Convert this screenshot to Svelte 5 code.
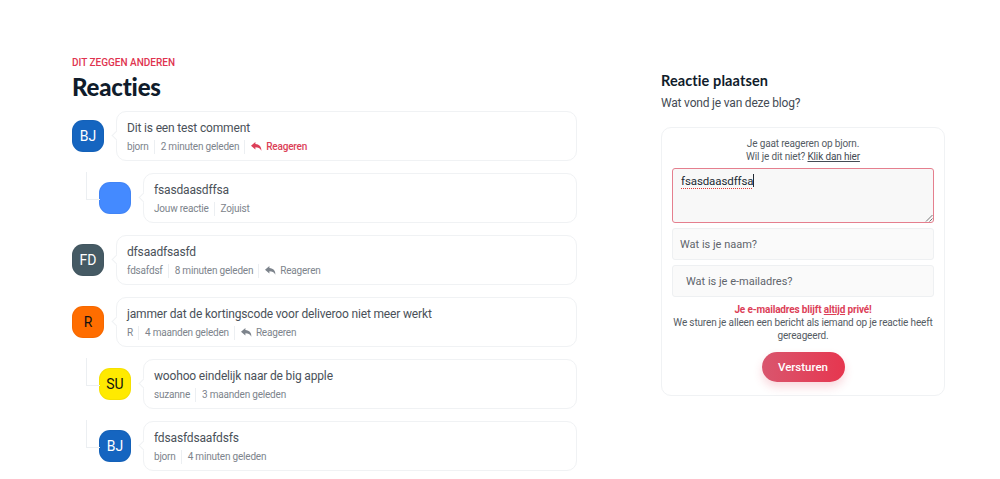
<script>
  const comments = [
    { text: 'Dit is een test comment', name: 'bjorn', time: '2 minuten geleden', initials: 'BJ', color: '#1565c0', ink: '#fff', reply: 'active' },
    { text: 'fsasdaasdffsa', name: 'Jouw reactie', time: 'Zojuist', initials: '', color: '#448aff', nested: true },
    { text: 'dfsaadfsasfd', name: 'fdsafdsf', time: '8 minuten geleden', initials: 'FD', color: '#455a64', ink: '#fff', reply: 'plain' },
    { text: 'jammer dat de kortingscode voor deliveroo niet meer werkt', name: 'R', time: '4 maanden geleden', initials: 'R', color: '#ff6d00', ink: '#111', reply: 'plain' },
    { text: 'woohoo eindelijk naar de big apple', name: 'suzanne', time: '3 maanden geleden', initials: 'SU', color: '#ffea00', ink: '#111', nested: true },
    { text: 'fdsasfdsaafdsfs', name: 'bjorn', time: '4 minuten geleden', initials: 'BJ', color: '#1565c0', ink: '#fff', nested: true }
  ];
</script>

<div class="page">
  <section class="left">
    <div class="eyebrow">DIT ZEGGEN ANDEREN</div>
    <h1>Reacties</h1>
    <ul class="list">
      {#each comments as c}
        <li class="row" class:nested={c.nested}>
          <div class="avatar" style="background: {c.color}; color: {c.ink}">{c.initials}</div>
          <div class="card">
            <div class="text">{c.text}</div>
            <div class="meta">
              <span>{c.name}</span>
              <span class="sep">{c.time}</span>
              {#if c.reply}
                <span class="sep reply" class:active={c.reply === 'active'}>
                  <svg width="11" height="10" viewBox="0 0 11 10"><path d="M4.400 0 0 3.800l4.400 3.800V5.300c2.700 0 4.700.8 5.900 3.500.3-3.800-1.800-6.300-5.900-6.700z" fill="currentColor"/></svg>
                  Reageren
                </span>
              {/if}
            </div>
          </div>
        </li>
      {/each}
    </ul>
  </section>

  <aside class="right">
    <h2>Reactie plaatsen</h2>
    <p class="lead">Wat vond je van deze blog?</p>
    <form class="form">
      <p class="notice">Je gaat reageren op bjorn.<br />Wil je dit niet? <u>Klik dan hier</u></p>
      <div class="area">
        <span class="typed">fsasdaasdffsa</span><span class="caret"></span>
        <svg class="grip" width="8" height="8" viewBox="0 0 8 8"><path d="M7.500 1 1 7.500M7.500 4.500 4.500 7.500" stroke="#777" fill="none"/></svg>
      </div>
      <div class="field">Wat is je naam?</div>
      <div class="field email">Wat is je e-mailadres?</div>
      <p class="privacy"><strong>Je e-mailadres blijft <u>altijd</u> privé!</strong><br />We sturen je alleen een bericht als iemand op je reactie heeft gereageerd.</p>
      <div class="send"><button type="button">Versturen</button></div>
    </form>
  </aside>
</div>

<style>
  :global(body) {
    margin: 0;
    background: #fff;
    font-family: Roboto, "Noto Sans", sans-serif;
  }

  .page {
    display: flex;
    justify-content: space-between;
    width: 873px;
    height: 479px;
    margin-left: 72px;
    padding-top: 57px;
    box-sizing: border-box;
    overflow: hidden;
  }

  .left {
    width: 505px;
  }

  .eyebrow {
    font-size: 10px;
    line-height: 12px;
    font-weight: 500;
    color: #e0334f;
  }

  h1 {
    margin: 2px 0 0;
    font-family: Lato, sans-serif;
    font-size: 24px;
    line-height: 32px;
    font-weight: 900;
    letter-spacing: -0.2px;
    color: #101c2b;
  }

  .list {
    list-style: none;
    margin: 8px 0 0;
    padding: 0;
    display: flex;
    flex-direction: column;
    gap: 12px;
  }

  .row {
    display: flex;
    align-items: center;
    gap: 12px;
    position: relative;
  }

  .row.nested {
    padding-left: 27px;
  }

  .row.nested::before {
    content: "";
    position: absolute;
    left: 14px;
    top: -1px;
    width: 13px;
    height: 27px;
    border-left: 1px solid #eceff2;
    border-bottom: 1px solid #eceff2;
  }

  .avatar {
    width: 32px;
    height: 32px;
    flex: none;
    border-radius: 11px;
    display: flex;
    align-items: center;
    justify-content: center;
    font-size: 14px;
    box-shadow: inset 0 0 0 1px rgba(0, 0, 0, 0.04);
  }

  .card {
    flex: 1;
    height: 50px;
    box-sizing: border-box;
    padding: 7px 10px 0;
    border: 1px solid #f0f2f4;
    border-radius: 10px;
    position: relative;
    background: #fff;
  }

  .card::before {
    content: "";
    position: absolute;
    left: -4px;
    top: 20px;
    width: 6px;
    height: 6px;
    background: #fff;
    border-left: 1px solid #f0f2f4;
    border-bottom: 1px solid #f0f2f4;
    transform: rotate(45deg);
  }

  .text {
    font-size: 12px;
    line-height: 18px;
    letter-spacing: -0.16px;
    color: #4a5159;
  }

  .meta {
    display: flex;
    align-items: center;
    margin-top: 3px;
    font-size: 10px;
    line-height: 14px;
    letter-spacing: -0.2px;
    color: #7d848c;
  }

  .sep {
    margin-left: 5px;
    padding-left: 6px;
    border-left: 1px solid #eceff2;
  }

  .reply {
    display: flex;
    align-items: center;
    gap: 4px;
  }

  .reply.active {
    color: #dc3f58;
    font-weight: 500;
  }

  .right {
    width: 284px;
    padding-top: 15px;
  }

  h2 {
    margin: 0;
    font-family: Lato, sans-serif;
    font-size: 14.500px;
    line-height: 18px;
    font-weight: 700;
    letter-spacing: 0.1px;
    color: #101c2b;
  }

  .lead {
    margin: 4px 0 0;
    font-size: 12px;
    line-height: 18px;
    letter-spacing: -0.19px;
    color: #444b54;
  }

  .form {
    margin-top: 15px;
    height: 269px;
    box-sizing: border-box;
    padding: 9px 10px 0;
    border: 1px solid #f0f2f4;
    border-radius: 10px;
  }

  .notice, .privacy {
    margin: 0;
    text-align: center;
    font-size: 10px;
    line-height: 13px;
    letter-spacing: -0.15px;
    color: #555c64;
  }

  .notice u {
    color: #444b54;
  }

  .area {
    position: relative;
    margin-top: 5px;
    height: 55px;
    box-sizing: border-box;
    padding: 5px 8px;
    background: #f8f8f8;
    border: 1px solid #e57f8e;
    border-radius: 3px;
    font-size: 11.500px;
    line-height: 14px;
    letter-spacing: -0.1px;
    color: #222a33;
  }

  .typed {
    padding-bottom: 1px;
    background: linear-gradient(90deg, #e53935 50%, transparent 50%) 0 100% / 2px 1px repeat-x;
  }

  .caret {
    display: inline-block;
    width: 1px;
    height: 13px;
    background: #222a33;
    vertical-align: -2px;
  }

  .grip {
    position: absolute;
    right: 0;
    bottom: 0;
  }

  .field {
    margin-top: 5px;
    height: 32px;
    box-sizing: border-box;
    padding: 0 7px;
    display: flex;
    align-items: center;
    background: #fafafa;
    border: 1px solid #eef0f2;
    border-radius: 3px;
    font-size: 11px;
    color: #5f656c;
  }

  .field.email {
    padding-left: 13px;
  }

  .privacy {
    margin-top: 6px;
  }

  .privacy strong {
    color: #dc3f58;
    font-weight: 700;
  }

  .send {
    display: flex;
    justify-content: center;
    margin-top: 10px;
  }

  button {
    width: 83px;
    height: 30px;
    border: 0;
    border-radius: 15px;
    background: linear-gradient(90deg, #d9566e, #e6364f);
    box-shadow: 0 5px 10px rgba(224, 60, 85, 0.2);
    color: #fff;
    font-family: inherit;
    font-size: 11.500px;
    font-weight: 500;
  }
</style>
